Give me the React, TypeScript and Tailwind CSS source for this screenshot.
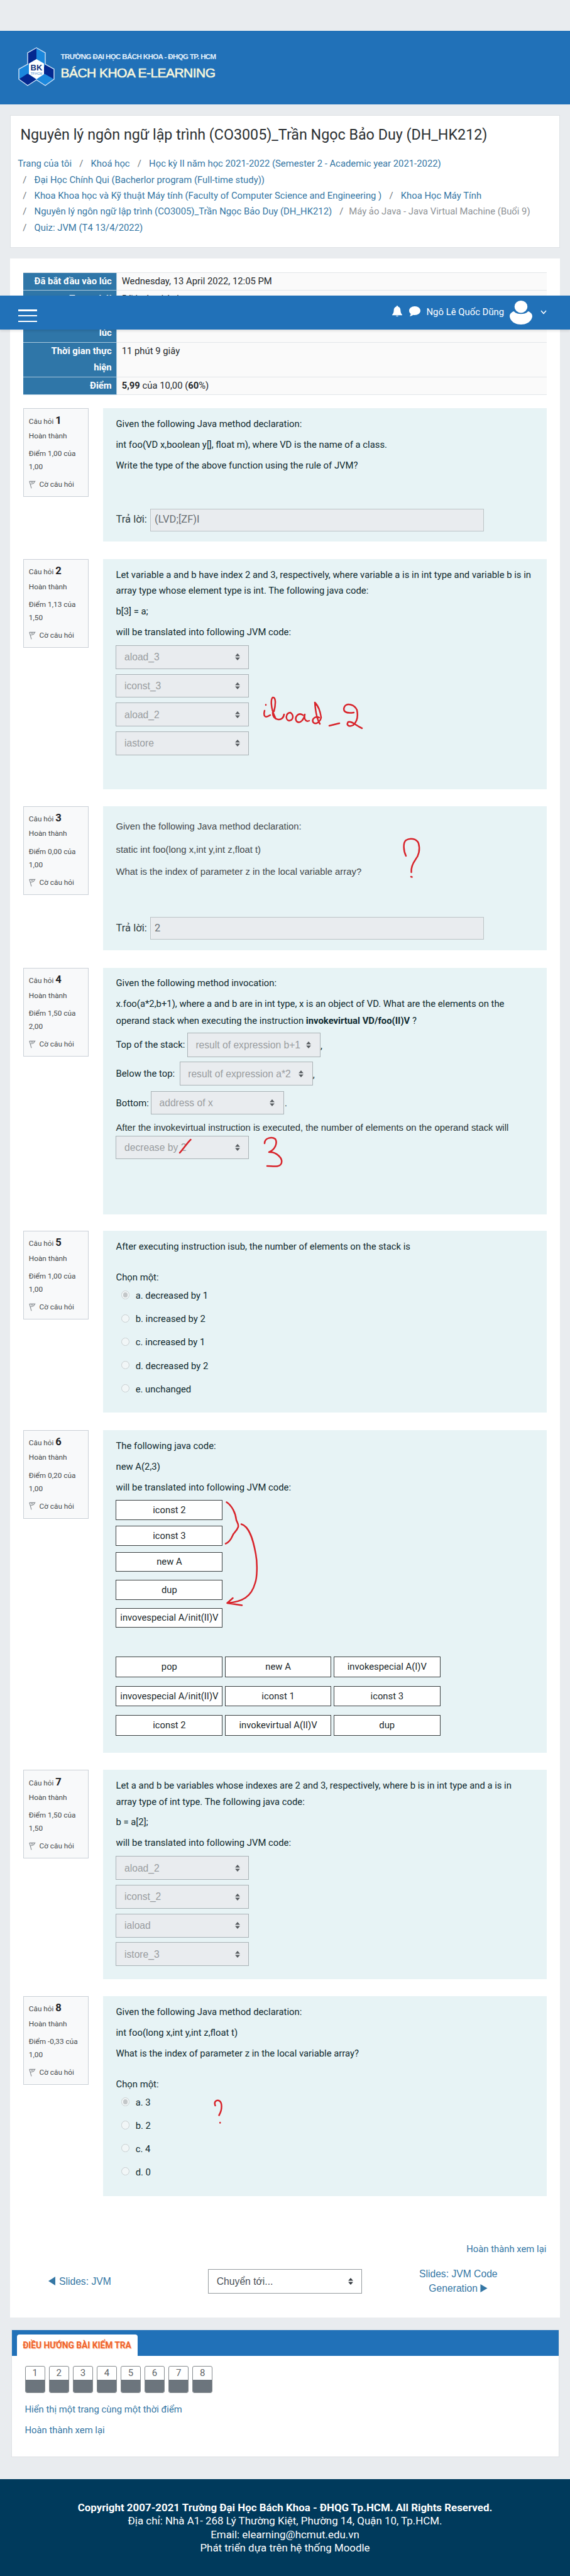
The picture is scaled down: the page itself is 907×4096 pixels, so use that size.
import type { ReactNode } from "react";

const LINK = "text-[#3577a5]";

function P({ children, className = "" }: { children: ReactNode; className?: string }) {
  return <p className={`leading-[25.5px] ${className}`}>{children}</p>;
}

function Arrows({ dark = false }: { dark?: boolean }) {
  return (
    <svg width="8" height="11" viewBox="0 0 8 11" className={dark ? "fill-[#343a40]" : "fill-[#565b5f]"}>
      <path d="M4 0 7.9 4.6H.1ZM4 11 .1 6.4h7.8Z" />
    </svg>
  );
}

function Select({ value, className = "h-[37.7px]" }: { value: string; className?: string }) {
  return (
    <div
      className={`flex w-[212px] shrink-0 items-center justify-between border border-[#a9b2b6] bg-[#e9ecef] pr-[13.5px] pl-[12.5px] font-['Liberation_Sans',sans-serif] text-[15.66px] whitespace-nowrap text-[#999da0] ${className}`}
    >
      <span>{value}</span>
      <Arrows />
    </div>
  );
}

function Flag() {
  return (
    <svg width="11" height="13" viewBox="0 0 11 13" fill="none" stroke="#8a8f93" strokeWidth="1.2">
      <path d="M.8 1.2 4 12.4M1 1.4h8.6L7.4 4.6 2.2 6.2M3.4 3.2h3" />
    </svg>
  );
}

function Question({
  n,
  mark,
  of,
  className,
  children,
}: {
  n: number;
  mark: string;
  of: string;
  className: string;
  children: ReactNode;
}) {
  return (
    <article className={`flex items-start pl-[21px] ${className}`}>
      <aside className="h-[141px] w-[103.7px] shrink-0 border border-[#cad0d7] bg-[#f8f9fa] pt-[8.4px] pl-[7.8px] text-[11.8px] leading-[20.9px] text-[#45494c]">
        <h3 className="h-[20.9px]">
          Câu hỏi <span className="text-[16.6px] font-bold text-[#1d2125]">{n}</span>
        </h3>
        <div className="mt-[3.6px]">Hoàn thành</div>
        <div className="mt-[7.2px]">Điểm {mark} của</div>
        <div className="mt-[0.3px]">{of}</div>
        <div className="mt-[6.9px] flex items-center gap-[5.7px]">
          <Flag />
          Cờ câu hỏi
        </div>
      </aside>
      <div className="relative ml-[23px] h-full w-[706px] shrink-0 bg-[#e7f3f5] pl-[20.8px] text-[14.83px] whitespace-nowrap text-[#0f2a2f]">
        {children}
      </div>
    </article>
  );
}

function Answer({ value, className }: { value: string; className: string }) {
  return (
    <div className={`flex items-center text-[16.6px] text-[#2f3d40] ${className}`}>
      <span className="w-[55px]">Trả lời:</span>
      <div className="flex h-full w-[530.5px] items-center border border-[#bcc3c6] bg-[#e9ecef] pl-[5.5px] text-[16.5px] text-[#6a7075]">
        {value}
      </div>
    </div>
  );
}

function Options({ items, className }: { items: string[]; className: string }) {
  return (
    <div className={`flex flex-col pl-[8.5px] ${className}`}>
      {items.map((t, i) => (
        <label key={t} className="flex items-start leading-[25.5px]">
          <span className="mt-[4.3px] mr-[9.5px] flex size-[13.2px] items-center justify-center rounded-full border border-[#c9cfd1] bg-[#f1f6f7]">
            {i === 0 && <span className="size-[7.6px] rounded-full bg-[#c3c7c9]" />}
          </span>
          {t}
        </label>
      ))}
    </div>
  );
}

function Box({ children, className = "" }: { children: ReactNode; className?: string }) {
  return (
    <div
      className={`flex w-[169.8px] shrink-0 items-center justify-center border border-[#3a3f40] bg-white text-[14.8px] text-[#20282a] ${className}`}
    >
      {children}
    </div>
  );
}

function Ink({ w, h, className, children }: { w: number; h: number; className: string; children: ReactNode }) {
  return (
    <svg
      width={w}
      height={h}
      viewBox={`0 0 ${w} ${h}`}
      fill="none"
      stroke="#d8232a"
      strokeWidth="2.5"
      strokeLinecap="round"
      strokeLinejoin="round"
      className={`absolute ${className}`}
    >
      {children}
    </svg>
  );
}

function Crest() {
  return (
    <svg width="58" height="62" viewBox="0 0 58 62">
      <path d="M29 1 43 9V27L57 35V51L43 61 29 52 15 61 1 51V35L15 27V9Z" fill="#1b87dc" />
      <path d="M29 1 15 9V27L21 24 29 19ZM37 42 43 27 57 35V51L43 43ZM1 51 15 42 29 51 15 61Z" fill="#04288f" />
      <path d="M29 19 41 26V43L29 51 17 43V26Z" fill="#fff" />
      <path
        d="M29 1 43 9V27L57 35V51L43 61 29 52 15 61 1 51V35L15 27V9Z"
        fill="none"
        stroke="#cfe3f7"
        strokeWidth="1.4"
      />
      <text x="29" y="37" textAnchor="middle" fontFamily="Liberation Sans" fontWeight="700" fontSize="13" fill="#15357f">
        BK
      </text>
      <text x="29" y="43.5" textAnchor="middle" fontFamily="Liberation Sans" fontSize="5" fill="#4c8fd0">
        TP.HCM
      </text>
    </svg>
  );
}

function Th({ children }: { children: ReactNode }) {
  return (
    <div className="w-[148.7px] shrink-0 border-r border-b border-[#a9c8dc] bg-[#2f76a8] pt-[1px] pr-[7px] text-right font-bold text-white">
      {children}
    </div>
  );
}

function Td({ children }: { children?: ReactNode }) {
  return <div className="grow border-b border-[#e2e6e9] bg-[#fafafa] pt-[1px] pl-[8px] text-[#25292c]">{children}</div>;
}

const Sep = ({ className = "" }: { className?: string }) => <span className={`text-[#70777c] ${className}`}>/</span>;

export default function App() {
  return (
    <div className="relative flex h-[4096px] w-[907px] flex-col overflow-hidden bg-[#e9ecef] font-[Roboto,sans-serif] text-[14.83px]">
      <header className="mt-[49px] flex h-[116.5px] shrink-0 items-start bg-[#2171b8] pl-[29px]">
        <div className="mt-[26px]">
          <Crest />
        </div>
        <div className="mt-[31px] ml-[9.5px] font-['Liberation_Sans',sans-serif] whitespace-nowrap">
          <div className="text-[11.5px] leading-[20px] font-bold tracking-[-0.6px] text-[#e6f1fc]">
            TRƯỜNG ĐẠI HỌC BÁCH KHOA - ĐHQG TP. HCM
          </div>
          <div className="mt-[2px] text-[21px] leading-[27px] tracking-[-0.54px] text-[#f7f6dc] [-webkit-text-stroke:0.6px_#f7f6dc]">
            BÁCH KHOA E-LEARNING
          </div>
        </div>
      </header>

      <section className="mt-[17.2px] ml-[16px] h-[211.2px] w-[874.5px] shrink-0 border border-[#dfe2e5] bg-white whitespace-nowrap">
        <h1 className="mt-[14.5px] ml-[15.4px] text-[23.27px] leading-[32px] text-[#2b2f32]">
          Nguyên lý ngôn ngữ lập trình (CO3005)_Trần Ngọc Bảo Duy (DH_HK212)
        </h1>
        <nav className={`mt-[17.9px] ml-[11.3px] leading-[25.45px] ${LINK}`}>
          <div>
            Trang của tôi
            <Sep className="mx-[12.2px]" />
            Khoá học
            <Sep className="mx-[12.2px]" />
            Học kỳ II năm học 2021-2022 (Semester 2 - Academic year 2021-2022)
          </div>
          <div>
            <Sep className="mr-[12.2px] ml-[8px]" />
            Đại Học Chính Qui (Bacherlor program (Full-time study))
          </div>
          <div>
            <Sep className="mr-[12.2px] ml-[8px]" />
            Khoa Khoa học và Kỹ thuật Máy tính (Faculty of Computer Science and Engineering )
            <Sep className="mx-[12.2px]" />
            Khoa Học Máy Tính
          </div>
          <div>
            <Sep className="mr-[12.2px] ml-[8px]" />
            Nguyên lý ngôn ngữ lập trình (CO3005)_Trần Ngọc Bảo Duy (DH_HK212)
            <Sep className="mr-[8.8px] ml-[12.2px]" />
            <span className="text-[#8e9296]">Máy ảo Java - Java Virtual Machine (Buổi 9)</span>
          </div>
          <div>
            <Sep className="mr-[12.2px] ml-[8px]" />
            Quiz: JVM (T4 13/4/2022)
          </div>
        </nav>
      </section>

      <main className="mt-[16.9px] ml-[16px] h-[3274.4px] w-[875px] shrink-0 bg-white pt-[21.9px]">
        <div className="ml-[21px] w-[832.6px] border-t border-[#e2e6e9] leading-[25.45px]">
          <div className="flex h-[28.4px]">
            <Th>Đã bắt đầu vào lúc</Th>
            <Td>Wednesday, 13 April 2022, 12:05 PM</Td>
          </div>
          <div className="flex h-[28.8px]">
            <Th>Trạng thái</Th>
            <Td>Đã hoàn thành</Td>
          </div>
          <div className="flex h-[54.3px] items-stretch">
            <Th>
              <span className="block pt-[25.4px]">lúc</span>
            </Th>
            <Td />
          </div>
          <div className="flex h-[54.4px]">
            <Th>
              Thời gian thực
              <br />
              hiện
            </Th>
            <Td>11 phút 9 giây</Td>
          </div>
          <div className="flex h-[28.4px]">
            <Th>Điểm</Th>
            <Td>
              <b>5,99</b> của 10,00 (<b>60</b>%)
            </Td>
          </div>
        </div>

        <Question n={1} mark="1,00" of="1,00" className="mt-[21.3px] h-[211.9px]">
          <P className="pt-[12.9px]">Given the following Java method declaration:</P>
          <P className="mt-[6.9px]">int foo(VD x,boolean y[], float m), where VD is the name of a class.</P>
          <P className="mt-[7.5px]">Write the type of the above function using the rule of JVM?</P>
          <Answer value="(LVD;[ZF)I" className="mt-[55.7px] h-[35.9px]" />
        </Question>

        <Question n={2} mark="1,13" of="1,50" className="mt-[27.7px] h-[366.4px]">
          <P className="pt-[12.9px]">
            Let variable a and b have index 2 and 3, respectively, where variable a is in int type and variable b is in
            <br />
            array type whose element type is int. The following java code:
          </P>
          <P className="mt-[7.6px]">b[3] = a;</P>
          <P className="mt-[7.5px]">will be translated into following JVM code:</P>
          <div className="mt-[7.3px] flex flex-col gap-[8px]">
            <Select value="aload_3" />
            <Select value="iconst_3" />
            <Select value="aload_2" />
            <Select value="iastore" />
          </div>
          <Ink w={164} h={64} className="top-[214px] left-[252px]">
            <path d="M7 17.5V18M5 27C3 35 5 40 14 34M22 38C14 22 15 8 18 6 23 5 23 16 20 28M18 30C17 42 34 46 36 33M46 30C38 31 38 42 44 43 51 42 52 34 46 30M66 34C58 29 52 38 56 44 62 49 68 40 69 33 67 42 72 45 76 43M92 38C86 35 80 40 82 45 86 51 94 44 95 38 94 30 91 20 85 14M85 14C86 28 88 40 93 48M108 51 124 47M147 30C134 32 129 28 132 21 136 14 148 17 152 26 154 36 153 44 146 50 138 54 135 49 138 45 144 43 149 50 160 55" />
          </Ink>
        </Question>

        <Question n={3} mark="0,00" of="1,00" className="mt-[26.4px] h-[229.3px]">
          <div className="pt-[20.6px] font-['Liberation_Sans',sans-serif] text-[#44494c]">
            <P>Given the following Java method declaration:</P>
            <P className="mt-[11.1px]">static int foo(long x,int y,int z,float t)</P>
            <P className="mt-[9.9px]">What is the index of parameter z in the local variable array?</P>
          </div>
          <Answer value="2" className="mt-[58.3px] h-[36.4px]" />
          <Ink w={40} h={70} className="top-[46px] left-[474px]">
            <path d="M8 33C4 25 3 12 8 8 14 4 25 5 28 13 31 23 28 33 23 39 18 46 16 52 16.5 59M16 66 17.5 66.5" />
          </Ink>
        </Question>

        <Question n={4} mark="1,50" of="2,00" className="mt-[28.1px] h-[391.6px]">
          <P className="pt-[12.3px]">Given the following method invocation:</P>
          <p className="mt-[6.6px] leading-[26.3px]">
            x.foo(a*2,b+1), where a and b are in int type, x is an object of VD. What are the elements on the
            <br />
            operand stack when executing the instruction <b>invokevirtual VD/foo(II)V</b> ?
          </p>
          <div className="mt-[6px] flex items-center">
            <span className="w-[113.4px]">Top of the stack:</span>
            <Select value="result of expression b+1" className="h-[38.6px]" />
            <span className="mt-[3px]">,</span>
          </div>
          <div className="mt-[7.9px] flex items-center">
            <span className="w-[101.2px]">Below the top:</span>
            <Select value="result of expression a*2" className="h-[37.9px]" />
            <span className="mt-[3px]">,</span>
          </div>
          <div className="mt-[8.6px] flex items-center">
            <span className="w-[55.5px]">Bottom:</span>
            <Select value="address of x" className="h-[37.5px]" />
            <span className="ml-[1px]">.</span>
          </div>
          <P className="mt-[8.8px] font-['Liberation_Sans',sans-serif] text-[#273436]">
            After the invokevirtual instruction is executed, the number of elements on the operand stack will
          </P>
          <Select value="decrease by 2" className="-mt-[0.9px] h-[37.5px]" />
          <Ink w={175} h={56} className="top-[265px] left-[118px]">
            <path d="M4 29C9 24 16 13 21.5 8M139 14C139 5 151 3 156 7 160 13 156 24 146 28 158 27 168 38 166 45 164 53 152 50 143 50" />
          </Ink>
        </Question>

        <Question n={5} mark="1,00" of="1,00" className="mt-[26.1px] h-[289.3px]">
          <P className="pt-[13.8px]">After executing instruction isub, the number of elements on the stack is</P>
          <P className="mt-[22.9px]">Chọn một:</P>
          <Options
            className="mt-[3.7px] gap-[11.7px]"
            items={["a. decreased by 1", "b. increased by 2", "c. increased by 1", "d. decreased by 2", "e. unchanged"]}
          />
        </Question>

        <Question n={6} mark="0,20" of="1,00" className="mt-[27.6px] h-[513.4px]">
          <P className="pt-[13px]">The following java code:</P>
          <P className="mt-[7.8px]">new A(2,3)</P>
          <P className="mt-[7.4px]">will be translated into following JVM code:</P>
          <Box className="mt-[6.3px] h-[32.2px]">iconst 2</Box>
          <Box className="mt-[9.5px] h-[31.9px]">iconst 3</Box>
          <Box className="mt-[9.4px] h-[31.6px]">new A</Box>
          <Box className="mt-[12.6px] h-[32.2px]">dup</Box>
          <Box className="mt-[12.9px] h-[31.5px]">invovespecial A/init(II)V</Box>
          <div className="mt-[45.9px] flex flex-wrap gap-x-[3.4px] gap-y-[14.2px]">
            {[
              "pop",
              "new A",
              "invokespecial A(I)V",
              "invovespecial A/init(II)V",
              "iconst 1",
              "iconst 3",
              "iconst 2",
              "invokevirtual A(II)V",
              "dup",
            ].map((t) => (
              <Box key={t} className="h-[32.4px]">
                {t}
              </Box>
            ))}
          </div>
          <Ink w={60} h={180} className="top-[105px] left-[190px]">
            <path d="M6.5 9.5C15 15 21 27 22 38 23 41 26 44 25 49 22 57 18 57 16 63 13 70 9 74 5 75.5M30 44.5C43 48 49 70 53 92 56 108 55 130 52 138 46 160 32 168 7.5 170M16.5 162 7.5 170 31 173.5" />
          </Ink>
        </Question>

        <Question n={7} mark="1,50" of="1,50" className="mt-[27.3px] h-[333.2px]">
          <P className="pt-[12.8px]">
            Let a and b be variables whose indexes are 2 and 3, respectively, where b is in int type and a is in
            <br />
            array type of int type. The following java code:
          </P>
          <P className="mt-[7.3px]">b = a[2];</P>
          <P className="mt-[7.4px]">will be translated into following JVM code:</P>
          <div className="mt-[7.6px] flex flex-col gap-[7.7px]">
            <Select value="aload_2" className="h-[38px]" />
            <Select value="iconst_2" className="h-[38px]" />
            <Select value="iaload" className="h-[38px]" />
            <Select value="istore_3" className="h-[38px]" />
          </div>
        </Question>

        <Question n={8} mark="-0,33" of="1,00" className="mt-[26.5px] h-[318.1px]">
          <P className="pt-[12.8px]">Given the following Java method declaration:</P>
          <P className="mt-[7.9px]">int foo(long x,int y,int z,float t)</P>
          <P className="mt-[7.3px]">What is the index of parameter z in the local variable array?</P>
          <P className="mt-[23.2px]">Chọn một:</P>
          <Options className="mt-[4.1px] gap-[11.4px]" items={["a. 3", "b. 2", "c. 4", "d. 0"]} />
          <Ink w={30} h={45} className="top-[160px] left-[172px]">
            <path d="M6.5 14C4 8 8 5 12 6 18 8 18 20 12.5 29.5M14.2 41V41.5" />
          </Ink>
        </Question>

        <div className={`pr-[21.7px] ${LINK}`}>
          <P className="mt-[72.2px] text-right">Hoàn thành xem lại</P>
          <div className="mt-[14.2px] flex items-center pl-[61px] font-['Liberation_Sans',sans-serif] text-[15.68px]">
            <div className="flex w-[253.8px] shrink-0 items-center gap-[6px]">
              <svg width="11" height="14" viewBox="0 0 11 14" className="fill-current">
                <path d="M11 0v14L0 7Z" />
              </svg>
              Slides: JVM
            </div>
            <div className="flex h-[38.9px] w-[245.5px] shrink-0 items-center justify-between border border-[#959b9f] bg-white pr-[13.5px] pl-[13px] text-[#495057]">
              Chuyển tới...
              <Arrows dark />
            </div>
            <div className="ml-[53px] w-[200px] shrink-0 text-center leading-[23.6px]">
              Slides: JVM Code
              <br />
              Generation{" "}
              <svg width="12" height="13" viewBox="0 0 12 14" className="inline fill-current align-[-1px]">
                <path d="M0 0v14L12 7Z" />
              </svg>
            </div>
          </div>
        </div>
      </main>

      <section className="mt-[18.5px] ml-[17.5px] h-[203.7px] w-[872px] shrink-0 border border-[#dfe2e5] bg-white">
        <div className="flex h-[41.7px] items-end bg-[#2171b8] pl-[8px]">
          <h2 className="h-[34.5px] w-[192px] rounded-t-[4px] bg-white text-center text-[13.75px] leading-[34px] font-bold whitespace-nowrap text-[#f0622a] [text-shadow:1px_1px_1px_#f9c9b3]">
            ĐIỀU HƯỚNG BÀI KIỂM TRA
          </h2>
        </div>
        <div className={`pt-[16px] pl-[21px] ${LINK}`}>
          <div className="flex gap-[5.7px]">
            {[1, 2, 3, 4, 5, 6, 7, 8].map((n) => (
              <div
                key={n}
                className="flex h-[43px] w-[32.4px] flex-col overflow-hidden rounded-[3px] border border-[#868b8f] bg-white"
              >
                <span className="h-[20.8px] text-center text-[15px] leading-[20.5px] text-[#5f6569]">{n}</span>
                <span className="grow bg-[#6c757d]" />
              </div>
            ))}
          </div>
          <P className="mt-[13.7px]">Hiển thị một trang cùng một thời điểm</P>
          <P className="mt-[7.4px]">Hoàn thành xem lại</P>
        </div>
      </section>

      <footer className="mt-[34.8px] grow bg-[#003a5c] pt-[35.2px] text-center text-[16.9px] leading-[21.15px] text-white">
        <p className="font-bold">Copyright 2007-2021 Trường Đại Học Bách Khoa - ĐHQG Tp.HCM. All Rights Reserved.</p>
        <p>Địa chỉ: Nhà A1- 268 Lý Thường Kiệt, Phường 14, Quận 10, Tp.HCM.</p>
        <p>Email: elearning@hcmut.edu.vn</p>
        <p>Phát triển dựa trên hệ thống Moodle</p>
      </footer>

      <div className="absolute top-[469.7px] left-0 flex h-[54px] w-[907px] bg-[#2171b8] text-white shadow-[0_2px_4px_rgba(0,0,0,0.12)]">
        <div className="mt-[22.5px] ml-[29px] flex h-[20px] w-[29.5px] flex-col justify-between">
          <span className="h-[2.6px] bg-white" />
          <span className="h-[2.6px] bg-white" />
          <span className="h-[2.6px] bg-white" />
        </div>
        <svg width="16" height="18" viewBox="0 0 16 18" className="mt-[16.6px] ml-[565.5px] fill-current">
          <path d="M8 0C9 0 9.3.8 9.3 1.5 12.5 2.4 13.3 5 13.4 8 13.5 11 14.5 13 16 14.5V15.3H0V14.5C1.5 13 2.5 11 2.6 8 2.7 5 3.5 2.4 6.7 1.5 6.7.8 7 0 8 0ZM6 16H10C9.6 17.6 6.4 17.6 6 16Z" />
        </svg>
        <svg width="18" height="17" viewBox="0 0 18 17" className="mt-[17.8px] ml-[11px] fill-current">
          <path d="M9 0C14 0 18 3 18 7S14 14 9 14C8 14 7 13.9 6.2 13.7 4.5 15 2.5 15.8.8 15.8 1.8 14.7 2.5 13.5 2.6 12 1 10.7 0 9 0 7 0 3 4 0 9 0Z" />
        </svg>
        <span className="mt-[13.9px] ml-[9.5px] w-[132.5px] text-[14.89px] leading-[25.5px] whitespace-nowrap">
          Ngô Lê Quốc Dũng
        </span>
        <svg width="36" height="38" viewBox="0 0 36 38" className="mt-[8px] fill-current">
          <ellipse cx="18" cy="9.7" rx="10.3" ry="9.7" />
          <path d="M6.5 17C10 20.5 14 21.2 18 21.2S26 20.5 29.5 17C33 18.5 36 21 36 25 35 32.5 28 38 18 38S1 32.5 0 25C0 21 3 18.5 6.5 17Z" />
        </svg>
        <svg width="10" height="7" viewBox="0 0 10 7" className="mt-[23.5px] ml-[12.8px] fill-none stroke-white">
          <path d="M1 1 5 5.5 9 1" strokeWidth="1.5" />
        </svg>
      </div>
    </div>
  );
}
